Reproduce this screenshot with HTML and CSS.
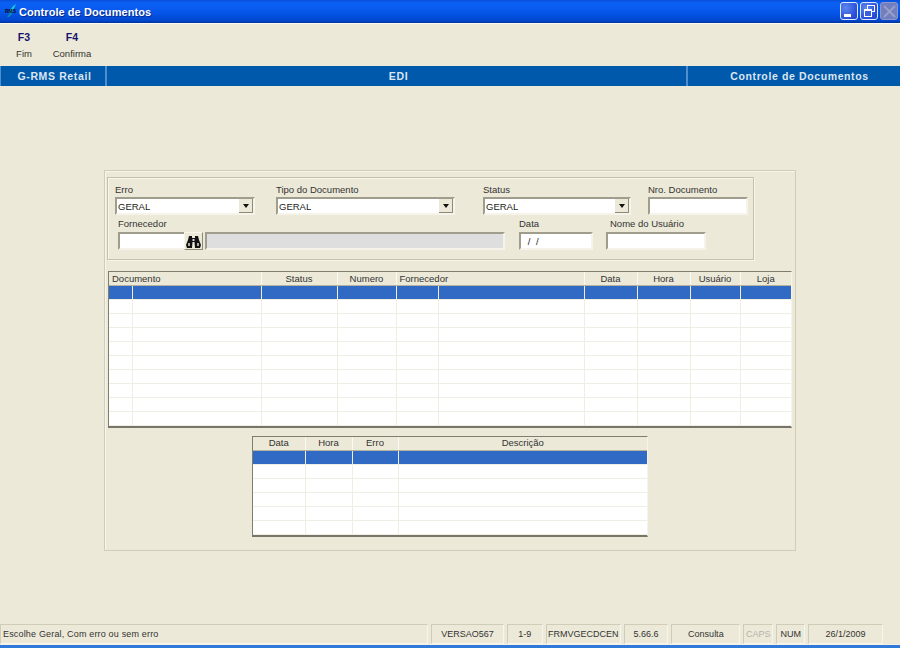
FILE: index.html
```html
<!DOCTYPE html>
<html lang="pt">
<head>
<meta charset="utf-8">
<title>Controle de Documentos</title>
<link rel="stylesheet" href="styles.css">
</head>
<body>
<div class="app">
  <header class="titlebar">
    <svg class="logo" width="17" height="14" viewBox="0 0 17 14"><path d="M7 8 L11 2 L14 0 L11 7 L8 10Z" fill="#19c8d8"/><path d="M5 13 L9 8 L10 10 L7 13Z" fill="#0a8fb0"/><text x="3" y="9" font-size="5" font-weight="700" font-family="Liberation Sans" fill="#08082a">RMS</text></svg>
    <span class="title-text">Controle de Documentos</span>
    <div class="winbtns">
      <span class="winbtn"><svg width="19" height="19" viewBox="0 0 19 19"><rect x="4" y="12" width="7" height="3" fill="#fff"/></svg></span>
      <span class="winbtn"><svg width="19" height="19" viewBox="0 0 19 19" fill="none" stroke="#fff"><rect x="7.5" y="3.5" width="7" height="6"/><rect x="4.500" y="7.500" width="7" height="7" fill="#3a5fe0"/><path d="M4.500 8.500H11.500"/></svg></span>
      <span class="winbtn disabled"><svg width="19" height="19" viewBox="0 0 19 19" stroke="#9a9ec8" stroke-width="2"><path d="M4 4L15 15M15 4L4 15"/></svg></span>
    </div>
  </header>
  <nav class="toolbar">
    <div class="tool"><b>F3</b><span>Fim</span></div>
    <div class="tool"><b>F4</b><span>Confirma</span></div>
  </nav>
  <div class="bluebar">
    <div class="seg seg-a">G-RMS Retail</div>
    <div class="seg seg-b">EDI</div>
    <div class="seg seg-c">Controle de Documentos</div>
  </div>
  <main class="workspace">
    <section class="panel">
      <form class="filters">
        <div class="row row-one">
          <div class="field f-erro"><label>Erro</label><div class="combo"><span>GERAL</span><i class="arrow"></i></div></div>
          <div class="field f-tipo"><label>Tipo do Documento</label><div class="combo"><span>GERAL</span><i class="arrow"></i></div></div>
          <div class="field f-status"><label>Status</label><div class="combo"><span>GERAL</span><i class="arrow"></i></div></div>
          <div class="field f-nro"><label>Nro. Documento</label><div class="input"></div></div>
        </div>
        <div class="row row-two">
          <div class="field f-forn"><label>Fornecedor</label>
            <div class="lookup">
              <div class="input code"></div>
              <button type="button" class="find"><svg width="15" height="13" viewBox="0 0 15 13" fill="#111"><path d="M3 1h3v2h3V1h3l1 4 2 5-1 3H9L8.500 7h-2L6 13H1L0 10l2-5z"/><rect x="2" y="8" width="2" height="3" fill="#aaa"/><rect x="11" y="8" width="2" height="3" fill="#aaa"/><rect x="6.500" y="4" width="2" height="2" fill="#ddd"/></svg></button>
              <div class="input readonly"></div>
            </div>
          </div>
          <div class="field f-data"><label>Data</label><div class="input date"> / /</div></div>
          <div class="field f-user"><label>Nome do Usuário</label><div class="input"></div></div>
        </div>
      </form>

      <div class="grid grid-docs">
        <table>
          <colgroup><col class="d1"><col class="d2"><col class="d3"><col class="d4"><col class="d5"><col class="d6"><col class="d7"><col class="d8"><col class="d9"><col class="d10"></colgroup>
          <thead><tr><th colspan="2" class="left">Documento</th><th>Status</th><th>Numero</th><th colspan="2" class="left">Fornecedor</th><th>Data</th><th>Hora</th><th>Usuário</th><th>Loja</th></tr></thead>
          <tbody>
            <tr class="sel"><td></td><td></td><td></td><td></td><td></td><td></td><td></td><td></td><td></td><td></td></tr>
            <tr><td></td><td></td><td></td><td></td><td></td><td></td><td></td><td></td><td></td><td></td></tr>
            <tr><td></td><td></td><td></td><td></td><td></td><td></td><td></td><td></td><td></td><td></td></tr>
            <tr><td></td><td></td><td></td><td></td><td></td><td></td><td></td><td></td><td></td><td></td></tr>
            <tr><td></td><td></td><td></td><td></td><td></td><td></td><td></td><td></td><td></td><td></td></tr>
            <tr><td></td><td></td><td></td><td></td><td></td><td></td><td></td><td></td><td></td><td></td></tr>
            <tr><td></td><td></td><td></td><td></td><td></td><td></td><td></td><td></td><td></td><td></td></tr>
            <tr><td></td><td></td><td></td><td></td><td></td><td></td><td></td><td></td><td></td><td></td></tr>
            <tr><td></td><td></td><td></td><td></td><td></td><td></td><td></td><td></td><td></td><td></td></tr>
            <tr><td></td><td></td><td></td><td></td><td></td><td></td><td></td><td></td><td></td><td></td></tr>
          </tbody>
        </table>
      </div>

      <div class="grid grid-log">
        <table>
          <colgroup><col class="l1"><col class="l2"><col class="l3"><col class="l4"></colgroup>
          <thead><tr><th>Data</th><th>Hora</th><th>Erro</th><th>Descrição</th></tr></thead>
          <tbody>
            <tr class="sel"><td></td><td></td><td></td><td></td></tr>
            <tr><td></td><td></td><td></td><td></td></tr>
            <tr><td></td><td></td><td></td><td></td></tr>
            <tr><td></td><td></td><td></td><td></td></tr>
            <tr><td></td><td></td><td></td><td></td></tr>
            <tr><td></td><td></td><td></td><td></td></tr>
          </tbody>
        </table>
      </div>
    </section>
  </main>
  <footer class="statusbar">
    <div class="cell s-msg">Escolhe Geral, Com erro ou sem erro</div>
    <div class="cell s-ver">VERSAO567</div>
    <div class="cell s-page">1-9</div>
    <div class="cell s-form">FRMVGECDCEN</div>
    <div class="cell s-num">5.66.6</div>
    <div class="cell s-mode">Consulta</div>
    <div class="cell s-caps">CAPS</div>
    <div class="cell s-nm">NUM</div>
    <div class="cell s-date">26/1/2009</div>
  </footer>
  <div class="bottomline"></div>
</div>
</body>
</html>
```
FILE: styles.css
```css
* { box-sizing: border-box; }
html, body { margin: 0; padding: 0; }
body { width: 900px; height: 648px; overflow: hidden; background: #ece9d8; font-family: "Liberation Sans", Arial, sans-serif; font-size: 10px; color: #222; }
.app { width: 900px; height: 648px; display: flex; flex-direction: column; }

.titlebar { height: 23px; flex: none; display: flex; align-items: center; padding-left: 2px; color: #fff; background: linear-gradient(#0a4fd8 0, #0a60f4 3px, #0a5cf0 8px, #0352e4 14px, #0048d0 20px, #0038ae 23px); border-bottom: 1px solid #0036a0; }
.logo { flex: none; }
.title-text { padding-top: 1px; font-weight: 700; font-size: 11px; letter-spacing: .06px; text-shadow: 1px 1px 0 #0a2a8a; }
.winbtns { margin-left: auto; display: flex; gap: 2px; padding-right: 2px; margin-top: -1px; }
.winbtn { width: 18px; height: 18px; display: block; border: 1px solid #dfe6ff; border-radius: 3px; background: radial-gradient(circle at 30% 30%, #5e86ef, #2a4fd8 70%, #2342c0); overflow: hidden; }
.winbtn svg { display: block; margin: -1px; }
.winbtn.disabled { background: #6f7fc0; border-color: #8f97cc; }

.toolbar { height: 43px; flex: none; display: flex; border-top: 1px solid #fbfaf4; }
.tool { width: 48px; display: flex; flex-direction: column; align-items: center; padding-top: 7px; }
.tool b { font-size: 10.500px; line-height: 12px; color: #14146e; }
.tool span { margin-top: 5px; font-size: 9.500px; line-height: 11px; white-space: nowrap; color: #333; }

.bluebar { height: 20px; flex: none; display: flex; background: #0059ab; color: #dce6f0; font-weight: 700; font-size: 10.500px; letter-spacing: .62px; }
.seg { display: flex; align-items: center; justify-content: center; padding-bottom: 1px; border-right: 2px solid #4f8fcf; }
.seg-a { width: 107px; padding-left: 3px; border-left: 1px solid #4f8fcf; }
.seg-b { width: 581px; padding-left: 4px; }
.seg-c { flex: 1; border-right: 0; padding-left: 11px; }

.workspace { flex: 1; min-height: 0; padding: 84px 104px 0; }
.panel { width: 692px; height: 381px; border: 1px solid #cfccb8; box-shadow: inset 1px 1px 0 #f8f6ec; padding: 6px 2px 0; }

.filters { width: 647px; height: 83px; border: 1px solid #c4c1ae; box-shadow: 1px 1px 0 #f8f6ec, inset 1px 1px 0 #f8f6ec; padding: 6px 7px 0; }
.row { display: flex; }
.row-one { height: 39px; }
.row-two { margin-top: -5px; padding-left: 3px; }
.row-two .input { margin-top: 3px; }
.field { flex: none; }
.field label { display: block; font-size: 9.500px; line-height: 11px; color: #333; white-space: nowrap; }
.f-erro { width: 140px; }
.f-tipo { width: 179px; margin-left: 21px; }
.f-status { width: 148px; margin-left: 28px; }
.f-nro { width: 100px; margin-left: 17px; }
.f-forn { width: 387px; }
.f-data { width: 74px; margin-left: 14px; }
.f-user { width: 100px; margin-left: 13px; }
.f-user label { padding-left: 4px; }

.combo, .input { height: 18px; margin-top: 2px; background: #fff; border: 2px solid; border-color: #a09d8c #f6f4ea #f6f4ea #a09d8c; font-size: 9.500px; line-height: 15px; color: #222; }
.combo { display: flex; align-items: stretch; padding-left: 1px; }
.combo span { flex: 1; padding-left: 0; }
.arrow { width: 14px; height: 14px; flex: none; background: #ece9d8; border-right: 1px solid #8d8a78; border-bottom: 1px solid #8d8a78; display: flex; align-items: center; justify-content: center; }
.arrow::after { content: ""; border: 3.500px solid transparent; border-top: 4px solid #111; border-bottom: 0; }
.lookup { display: flex; }
.input.code { width: 66px; border-right: 0; }
.find { width: 19px; height: 18px; margin: 3px 2px 0 0; padding: 0; background: #ece9d8; border: 1px solid; border-color: #f8f6ec #8d8a78 #8d8a78 #f8f6ec; display: flex; align-items: center; justify-content: center; }
.input.readonly { width: 300px; background: #dedede; }
.input.date { white-space: pre; padding-left: 1px; word-spacing: 3px; }

.grid { background: #fff; border-top: 1px solid #7f7d70; border-left: 1px solid #7f7d70; border-bottom: 2px solid #77756a; border-right: 1px solid #f6f4ea; }
.grid table { width: 100%; table-layout: fixed; border-collapse: collapse; }
.grid th { height: 13px; padding: 0; background: #ece9d8; font-weight: 400; font-size: 9.500px; line-height: 12px; color: #333; text-align: center; border-right: 1px solid #fbfaf2; border-bottom: 1px solid #b5b29e; white-space: nowrap; }
.grid th.left { text-align: left; padding-left: 3px; padding-top: 1px; }
.grid th:last-child, .grid td:last-child { border-right: 0; }
.grid td { height: 14px; padding: 0; border-right: 1px solid #f0eee2; border-bottom: 1px solid #f0eee2; }
.grid tr.sel td { background: #316ac5; border-right-color: #f0eee2; border-bottom-color: #f0eee2; }

.grid-docs { width: 684px; height: 157px; margin: 11px 0 0 1px; }
.d1 { width: 23px; } .d2 { width: 129px; } .d3 { width: 76px; } .d4 { width: 59px; } .d5 { width: 42px; }
.d6 { width: 146px; } .d7 { width: 53px; } .d8 { width: 53px; } .d9 { width: 50px; } .d10 { width: 51px; }

.grid-log { width: 396px; height: 101px; margin: 8px 0 0 145px; }
.l1 { width: 52px; } .l2 { width: 47px; } .l3 { width: 46px; } .l4 { width: 249px; }

.statusbar { height: 20px; flex: none; display: flex; padding-right: 17px; }
.cell { height: 20px; margin-right: 3px; display: flex; align-items: center; justify-content: center; font-size: 9px; color: #333; white-space: nowrap; border: 1px solid; border-color: #cfccb8 #f8f6ec #f8f6ec #cfccb8; }
.s-msg { width: 429px; justify-content: flex-start; padding-left: 2px; letter-spacing: .17px; }
.s-ver { width: 73px; }
.s-page { width: 36px; }
.s-form { width: 75px; }
.s-num { width: 45px; }
.s-mode { width: 69px; }
.s-caps { width: 30px; color: #b5b3a8; }
.s-nm { width: 29px; }
.s-date { width: 75px; margin-right: 0; }

.bottomline { height: 4px; flex: none; background: #2f7ad8; border-top: 1px solid #f4f2e8; }
```
